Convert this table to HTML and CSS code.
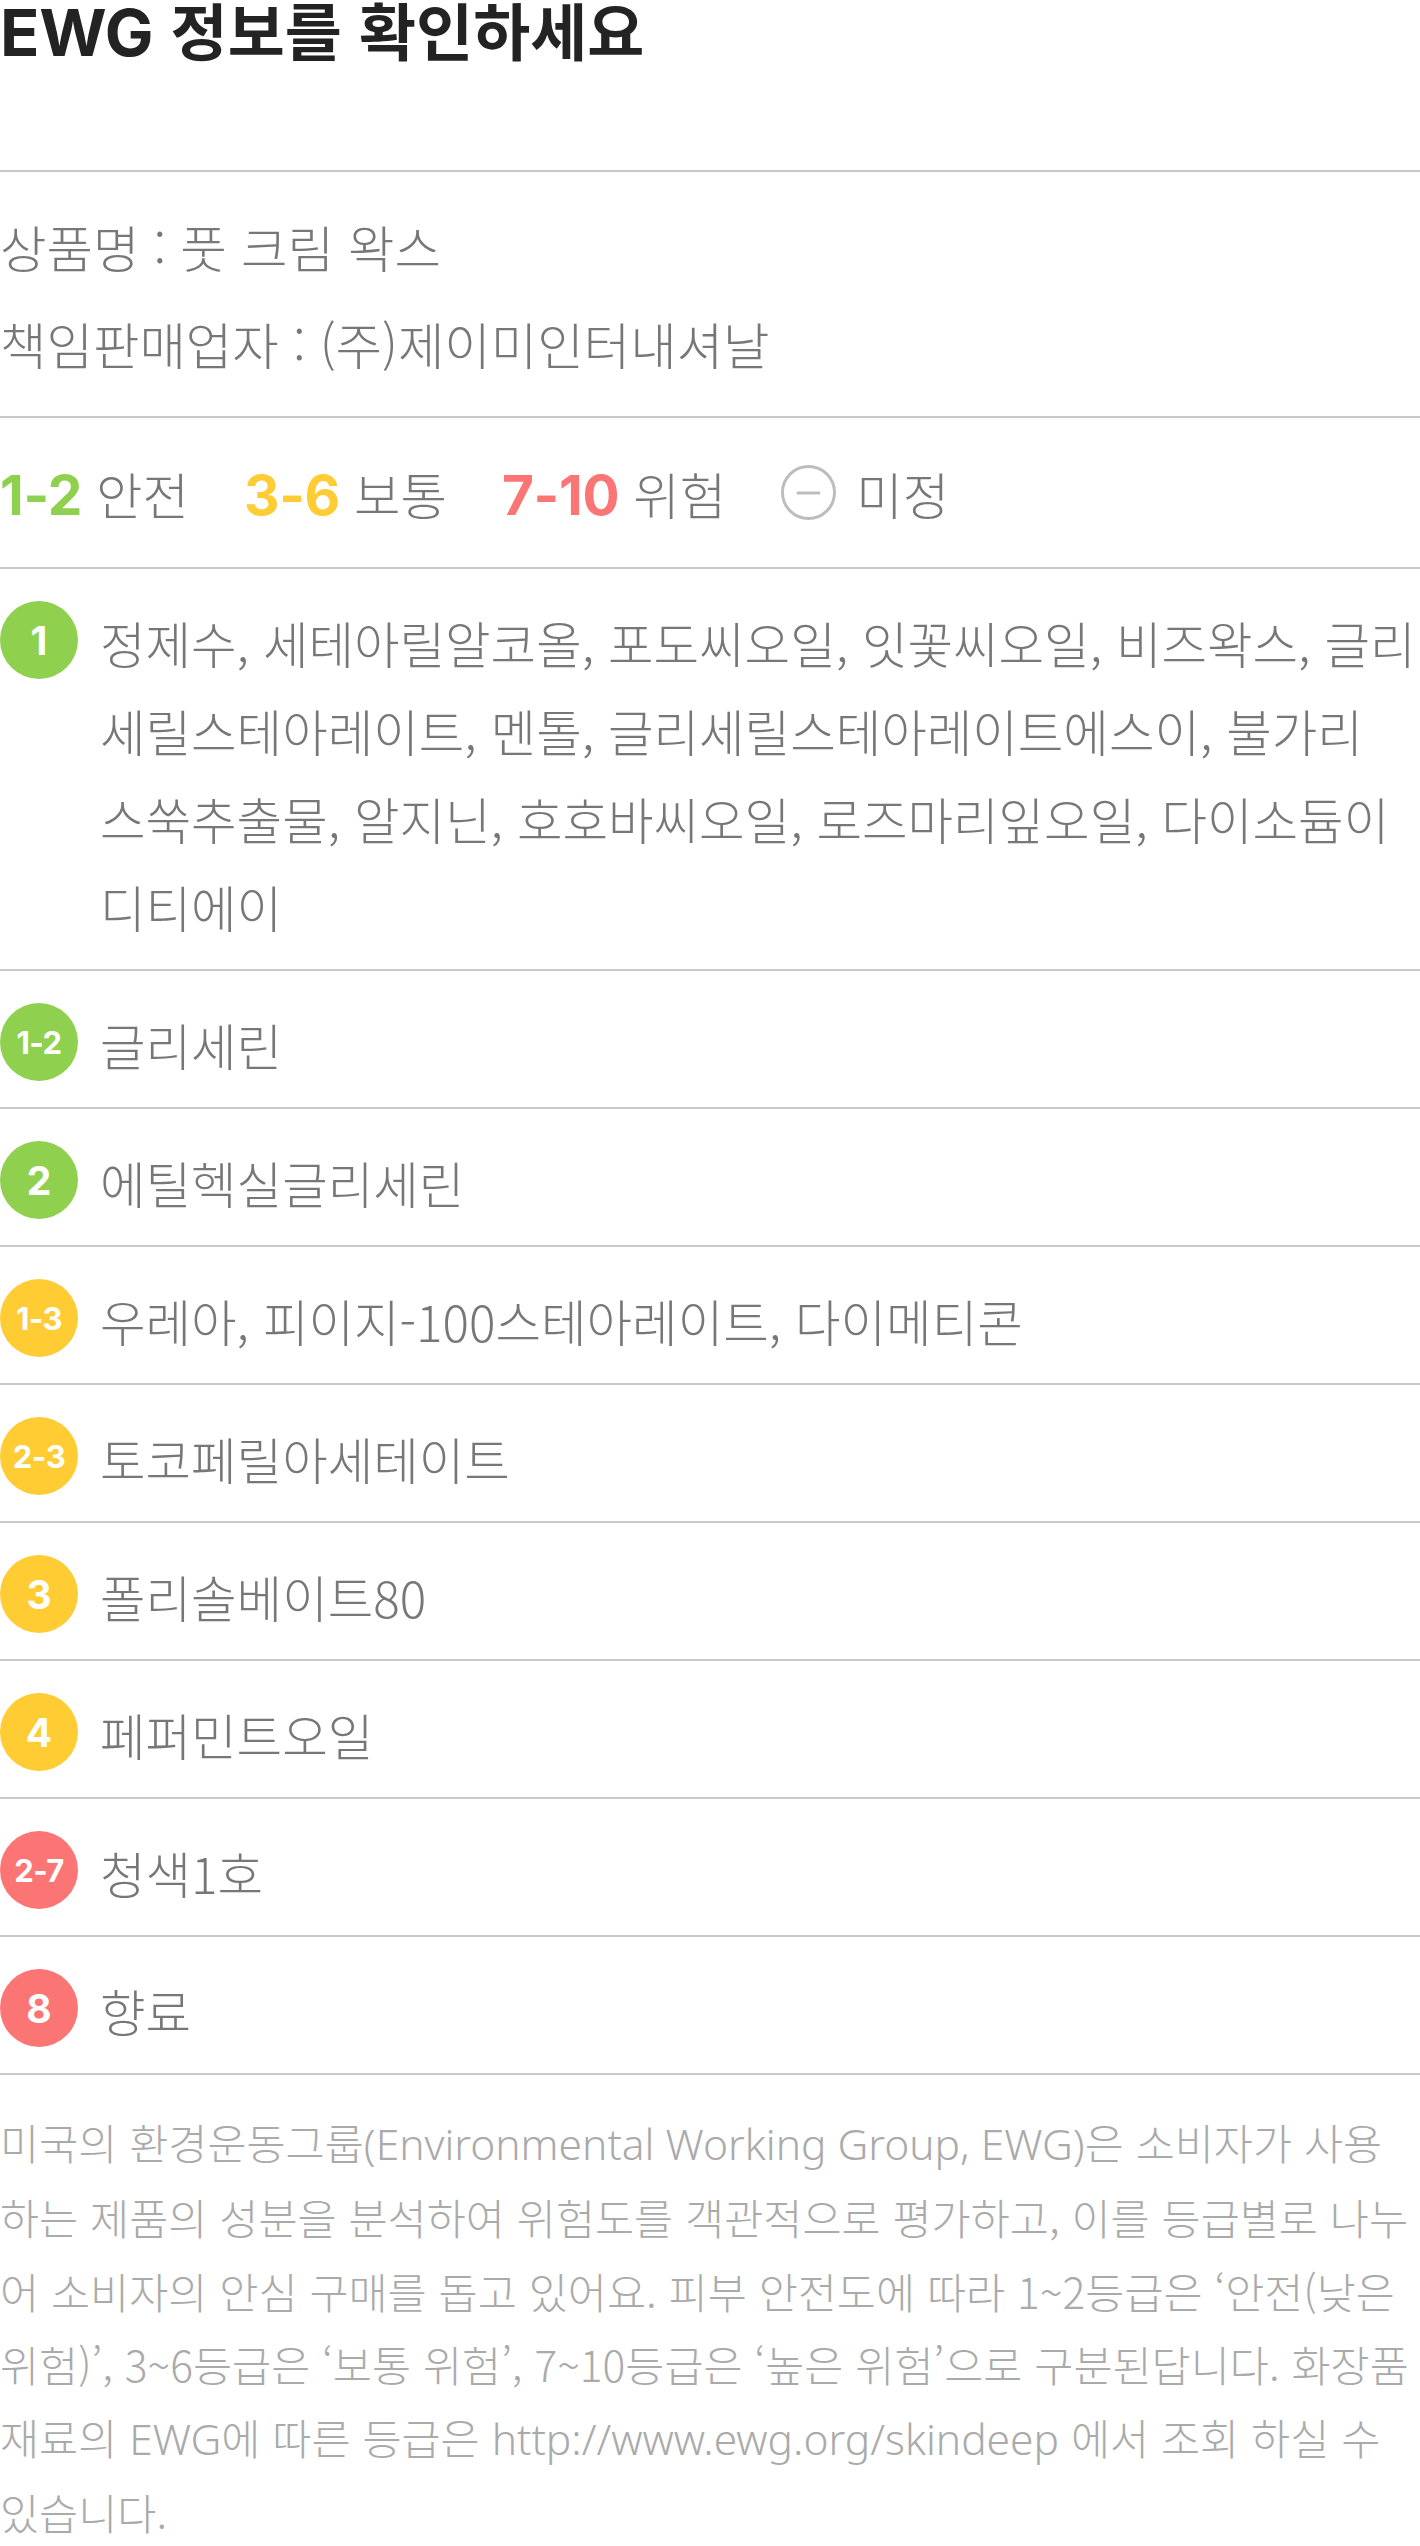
FILE: index.html
```html
<!DOCTYPE html>
<html lang="ko">
<head>
<meta charset="utf-8">
<title>EWG 정보를 확인하세요</title>
<link rel="stylesheet" href="styles.css">
</head>
<body>
<main class="ewg">
  <header class="ewg-head">
    <h1 class="ewg-title"><span class="en">EWG</span> 정보를 확인하세요</h1>
  </header>

  <section class="info">
    <p class="info-line">상품명 : 풋 크림 왁스</p>
    <p class="info-line">책임판매업자 : (주)제이미인터내셔날</p>
  </section>

  <section class="legend">
    <span class="legend-item"><span class="legend-num c-green">1-2</span>안전</span>
    <span class="legend-item"><span class="legend-num c-yellow">3-6</span>보통</span>
    <span class="legend-item"><span class="legend-num c-red">7-10</span>위험</span>
    <span class="legend-item legend-item--undef"><svg class="legend-undef" viewBox="0 0 56 56" aria-hidden="true"><circle cx="28" cy="28" r="26.5" fill="none" stroke="#bdbdbd" stroke-width="3"/><path d="M16 28.5h24" stroke="#bdbdbd" stroke-width="3"/></svg>미정</span>
  </section>

  <ul class="ing-list">
    <li class="ing"><span class="badge bg-green">1</span><p class="ing-names">정제수, 세테아릴알코올, 포도씨오일, 잇꽃씨오일, 비즈왁스, 글리<br>세릴스테아레이트, 멘톨, 글리세릴스테아레이트에스이, 불가리<br>스쑥추출물, 알지닌, 호호바씨오일, 로즈마리잎오일, 다이소듐이<br>디티에이</p></li>
    <li class="ing"><span class="badge badge--range bg-green">1-2</span><p class="ing-names">글리세린</p></li>
    <li class="ing"><span class="badge bg-green">2</span><p class="ing-names">에틸헥실글리세린</p></li>
    <li class="ing"><span class="badge badge--range bg-yellow">1-3</span><p class="ing-names">우레아, 피이지-100스테아레이트, 다이메티콘</p></li>
    <li class="ing"><span class="badge badge--range bg-yellow">2-3</span><p class="ing-names">토코페릴아세테이트</p></li>
    <li class="ing"><span class="badge bg-yellow">3</span><p class="ing-names">폴리솔베이트80</p></li>
    <li class="ing"><span class="badge bg-yellow">4</span><p class="ing-names">페퍼민트오일</p></li>
    <li class="ing"><span class="badge badge--range bg-red">2-7</span><p class="ing-names">청색1호</p></li>
    <li class="ing"><span class="badge bg-red">8</span><p class="ing-names">향료</p></li>
  </ul>

  <p class="note">미국의 환경운동그룹<span class="en">(Environmental Working Group, EWG)</span>은 소비자가 사용<br>하는 제품의 성분을 분석하여 위험도를 객관적으로 평가하고, 이를 등급별로 나누<br>어 소비자의 안심 구매를 돕고 있어요. 피부 안전도에 따라 1~2등급은 ‘안전(낮은<br>위험)’, 3~6등급은 ‘보통 위험’, 7~10등급은 ‘높은 위험’으로 구분된답니다. 화장품<br>재료의 <span class="en">EWG</span>에 따른 등급은 <span class="en">http://www.ewg.org/skindeep</span> 에서 조회 하실 수<br>있습니다.</p>
</main>
</body>
</html>
```

FILE: styles.css
```css
*, *::before, *::after {
  box-sizing: border-box;
}

html, body {
  margin: 0;
  padding: 0;
  background: #fff;
}

body {
  font-family: "Noto Sans CJK KR", "Noto Sans", sans-serif;
  font-weight: 300;
  color: #777;
}

.ewg {
  width: 1420px;
}

/* header */
.ewg-head {
  height: 172px;
  border-bottom: 2px solid #c8c8c8;
}

.ewg-title {
  margin: 0;
  font-size: 62px;
  line-height: 58px;
  font-weight: 700;
  color: #232323;
  letter-spacing: 0;
  white-space: nowrap;
}

.ewg-title .en {
  font-family: Inter, sans-serif;
  font-size: 65px;
  letter-spacing: -0.3px;
}

/* product info */
.info {
  padding: 26px 0 24px;
  border-bottom: 2px solid #c8c8c8;
}

.info-line {
  margin: 0;
  font-size: 50.5px;
  line-height: 97px;
}

/* legend */
.legend {
  height: 151px;
  display: flex;
  align-items: center;
  border-bottom: 2px solid #c8c8c8;
  font-size: 50.5px;
}

.legend-item {
  display: flex;
  align-items: baseline;
  margin-right: 55px;
}

.legend-item--undef {
  align-items: center;
  margin-right: 0;
}

.legend-num {
  font-family: Inter, sans-serif;
  font-weight: 700;
  font-size: 55px;
  letter-spacing: -0.3px;
  margin-right: 14px;
}

.legend-undef {
  display: block;
  width: 55px;
  height: 55px;
  margin-right: 20px;
}

.c-green { color: #8fd14f; }
.c-yellow { color: #ffcc33; }
.c-red { color: #fb7575; }

/* ingredient rows */
.ing-list {
  list-style: none;
  margin: 0;
  padding: 0;
}

.ing {
  display: flex;
  align-items: flex-start;
  padding: 30px 0 18px;
  border-bottom: 2px solid #c8c8c8;
}

.badge {
  flex: none;
  width: 78px;
  height: 78px;
  margin: 2px 22px 0 0;
  border-radius: 50%;
  display: flex;
  align-items: center;
  justify-content: center;
  color: #fff;
  font-family: Inter, sans-serif;
  font-weight: 700;
  font-size: 39px;
}

.badge--range {
  font-size: 31px;
  letter-spacing: -0.5px;
}

.bg-green { background: #8fd14f; }
.bg-yellow { background: #ffcc33; }
.bg-red { background: #fb7575; }

.ing-names {
  margin: 0;
  min-width: 0;
  font-size: 49.5px;
  line-height: 88px;
}

/* note */
.note {
  margin: 0;
  padding-top: 30px;
  font-size: 42.5px;
  line-height: 73.3px;
  color: #aaa;
}

.note .en {
  font-family: "Noto Sans", sans-serif;
}
```
